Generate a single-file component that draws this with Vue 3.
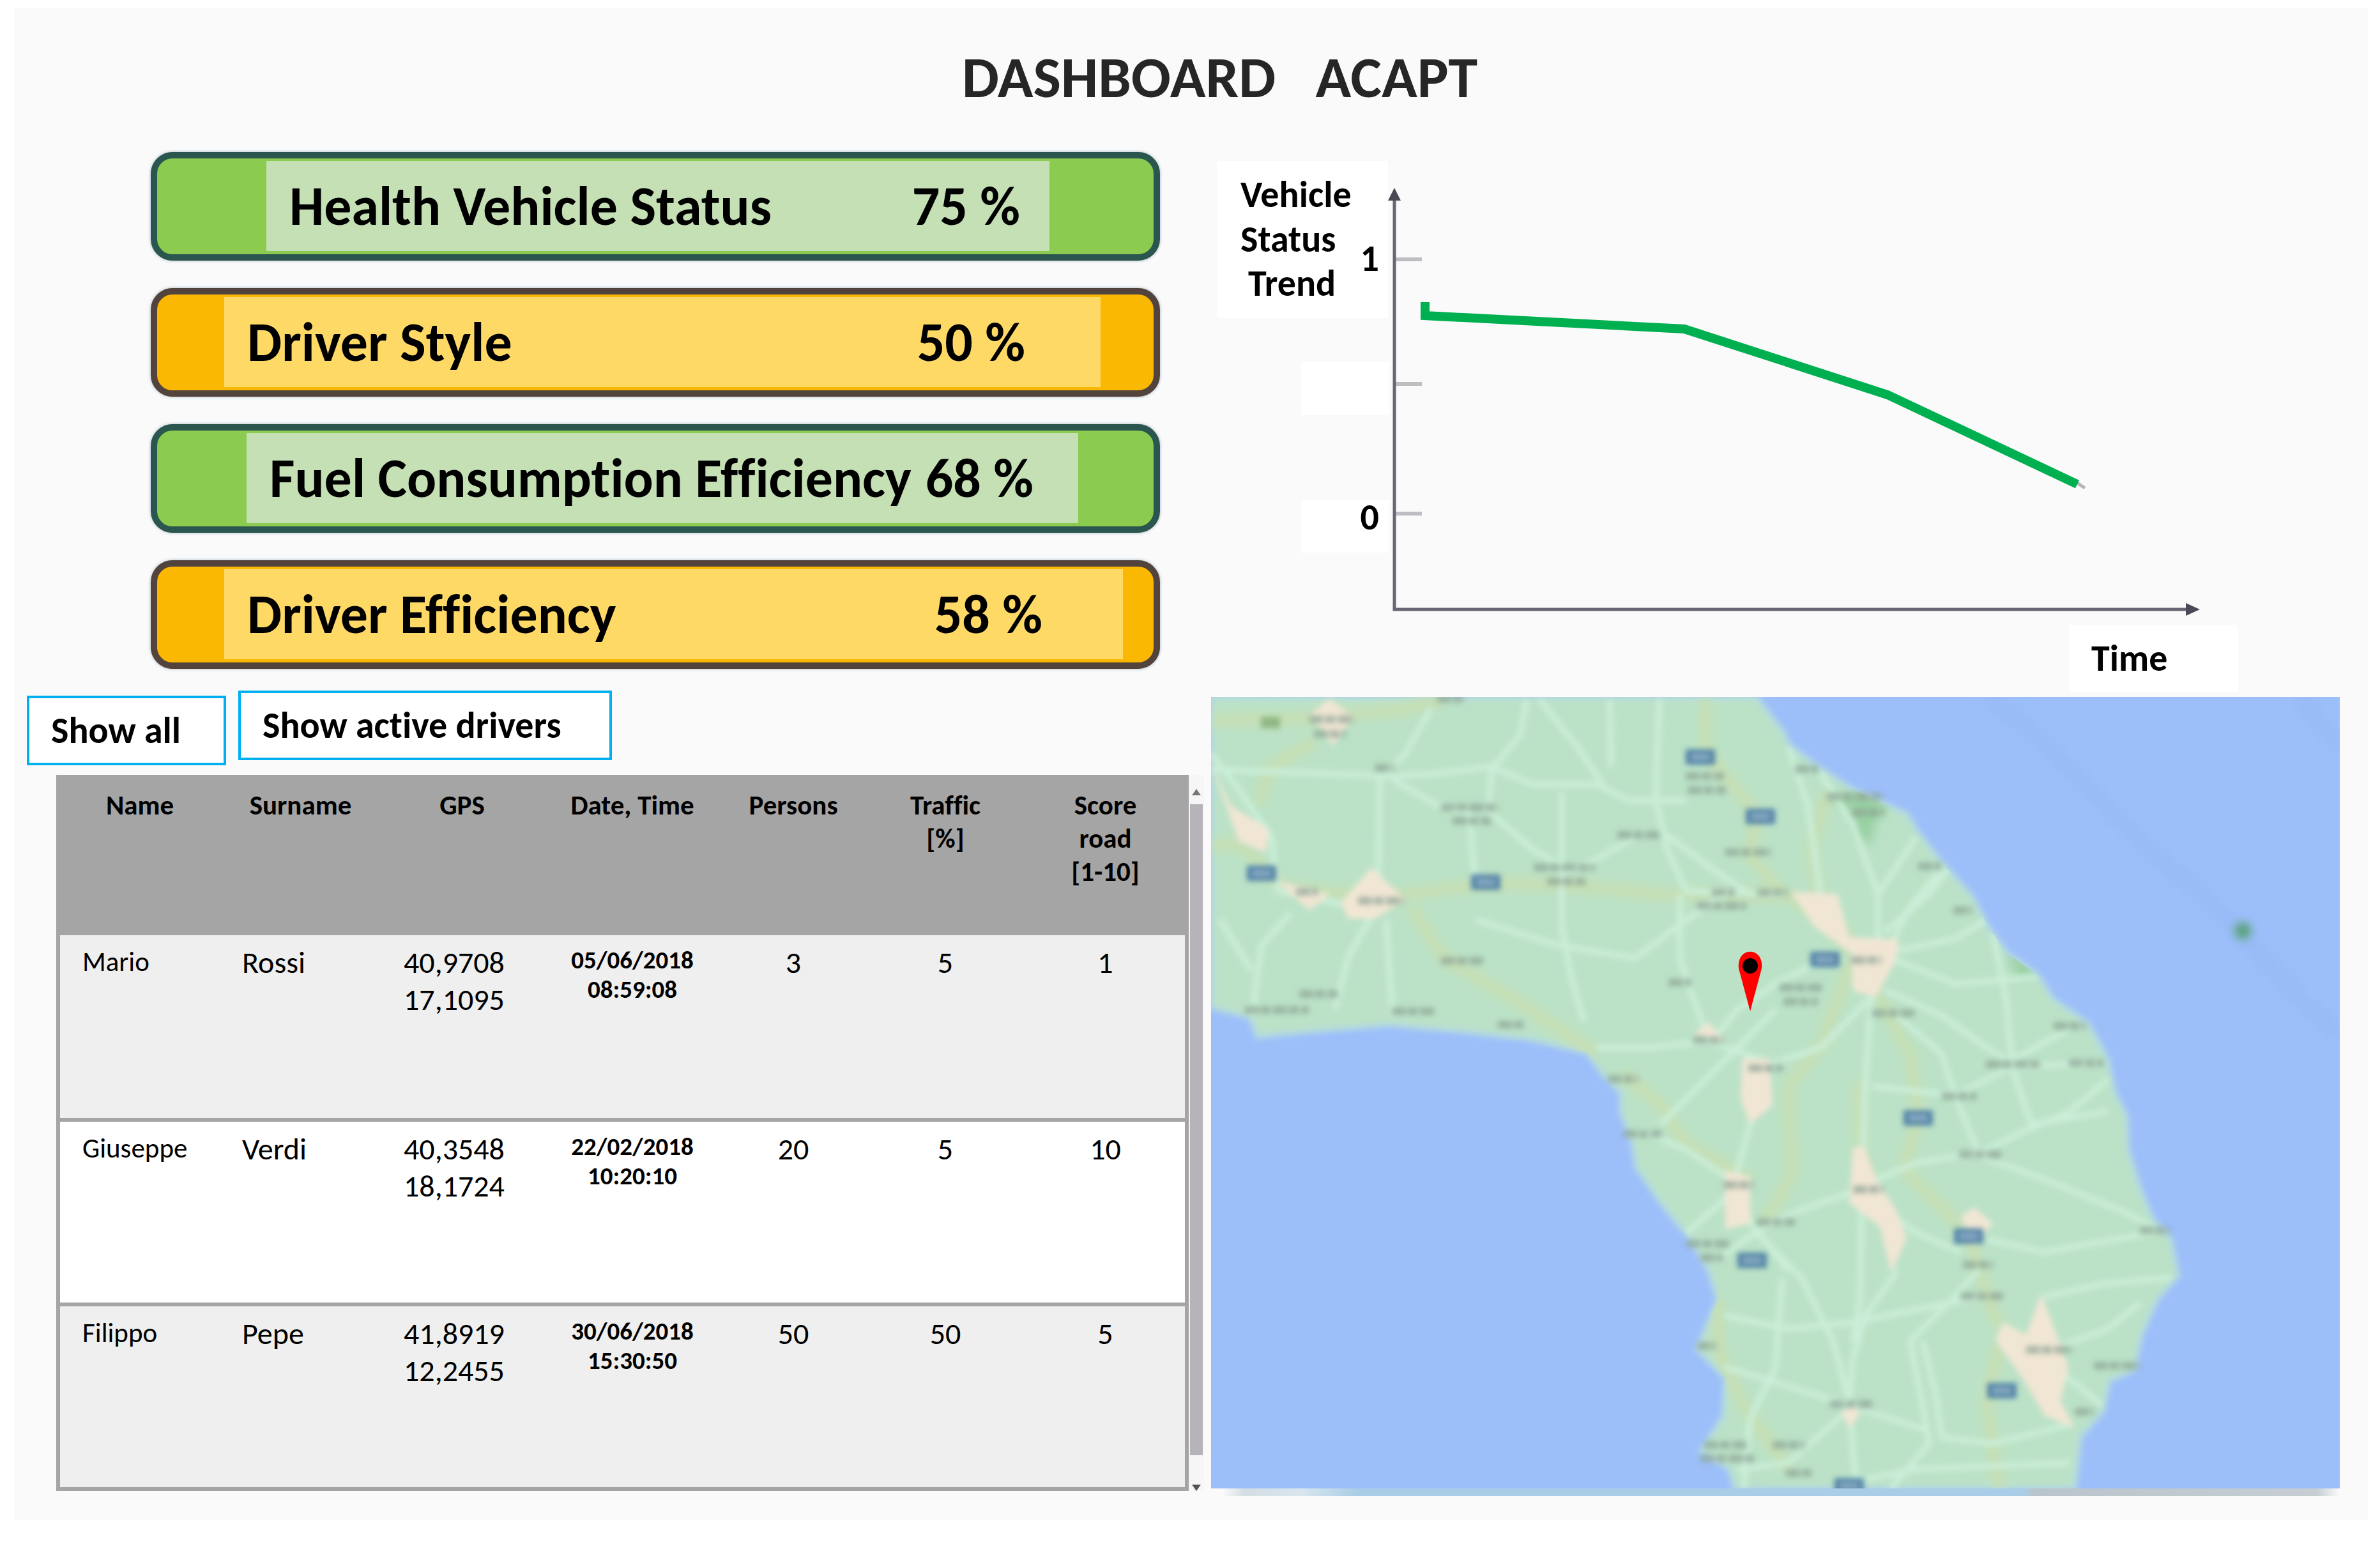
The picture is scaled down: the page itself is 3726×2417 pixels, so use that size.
<script setup>
const metrics = [
  { id: 'health', label: 'Health Vehicle Status', value: '75 %', tone: 'green' },
  { id: 'style', label: 'Driver Style', value: '50 %', tone: 'amber' },
  { id: 'fuel', label: 'Fuel Consumption Efficiency', value: '68 %', tone: 'green' },
  { id: 'driver', label: 'Driver Efficiency', value: '58 %', tone: 'amber' },
]

const columns = [
  ['Name'], ['Surname'], ['GPS'], ['Date, Time'], ['Persons'],
  ['Traffic', '[%]'], ['Score', 'road', '[1-10]'],
]

const drivers = [
  { name: 'Mario', surname: 'Rossi', gps: ['40,9708', '17,1095'], date: '05/06/2018', time: '08:59:08', persons: 3, traffic: 5, score: 1 },
  { name: 'Giuseppe', surname: 'Verdi', gps: ['40,3548', '18,1724'], date: '22/02/2018', time: '10:20:10', persons: 20, traffic: 5, score: 10 },
  { name: 'Filippo', surname: 'Pepe', gps: ['41,8919', '12,2455'], date: '30/06/2018', time: '15:30:50', persons: 50, traffic: 50, score: 5 },
]

const coast =
  'M1896 1091H2749L2793 1147L2800 1165L2840 1196L2901 1236L2985 1274L3003 1303L3039 1349L3088 1404L3112 1450L3142 1492L3190 1526L3214 1564L3269 1602L3299 1657L3311 1711L3329 1746L3332 1801L3350 1860L3371 1910L3398 1938L3410 1997L3377 2034L3353 2089L3341 2144L3302 2162L3293 2208L3257 2249L3248 2330H2716L2707 2299L2663 2272L2698 2217L2701 2157L2657 2112L2689 2034L2675 1988L2645 1938L2600 1883L2562 1828L2556 1791L2538 1741L2538 1711L2509 1682L2485 1648L2396 1627L2295 1615L2176 1604L1999 1619L1969 1623L1957 1593L1896 1577Z'

const minorRoads = [
  'M1896 1180L1935 1230L1990 1310L2000 1395L2100 1415',
  'M1896 1205L2000 1208L2170 1215L2240 1212L2335 1200L2400 1228L2500 1228L2550 1253L2640 1253',
  'M2240 1110L2200 1180L2160 1220L2158 1370L2150 1410',
  'M2390 1095L2380 1150L2335 1205L2330 1270L2400 1330L2450 1360',
  'M2410 1095L2470 1170L2510 1230',
  'M2520 1095L2522 1200M2598 1095L2592 1250L2610 1330L2640 1395L2790 1400',
  'M2155 1420L2110 1500L2090 1580M2170 1440L2180 1590M2020 1430L1975 1480L1960 1590M1910 1440L1960 1520',
  'M2180 1220L2250 1260L2300 1272',
  'M2445 1240L2445 1450L2460 1530L2480 1600M2300 1270L2310 1385',
  'M2310 1440L2440 1480L2560 1500L2640 1440L2700 1400',
  'M2560 1310L2490 1350L2440 1370M2600 1300L2680 1360L2740 1400',
  'M2630 1400L2630 1500L2650 1560L2675 1630L2760 1660',
  'M2500 1640L2580 1640L2680 1630L2720 1580L2780 1540L2860 1500',
  'M2600 1760L2700 1660L2780 1580M2750 1660L2740 1760L2715 1850L2745 1920L2800 1990',
  'M2715 1850L2640 1800L2570 1770M2720 1860L2640 1930',
  'M2760 1670L2850 1640L2930 1560L2940 1480M2930 1560L2920 1700L2915 1860',
  'M2800 1170L2830 1260L2850 1400M2850 1210L2900 1290L2940 1400L2940 1470',
  'M2950 1460L3020 1400L3050 1360M2960 1490L3060 1470L3110 1440M2960 1500L3060 1540L3190 1530',
  'M2950 1550L3040 1590L3110 1640L3160 1670L3270 1665',
  'M3000 1310L2940 1400M3040 1360L2990 1420L2960 1480M3120 1460L3140 1560L3150 1660L3240 1610',
  'M2970 1590L3040 1650L3060 1715L3100 1810L3210 1850L3320 1895L3370 1920',
  'M2930 1700L3060 1715L3150 1670M3300 1690L3240 1740L3170 1770L3100 1805',
  'M2930 1850L3000 1820L3100 1805M2920 1860L2830 1890L2770 1915L2690 1970',
  'M2970 1990L2920 2060L2900 2130L2895 2200L2905 2320M2915 1870L2912 2040L2900 2100',
  'M2750 1930L2820 2000L2870 2100L2895 2195M2700 2060L2800 2080L2900 2070L3000 2050L3100 2030',
  'M3100 1985L3060 2030L2990 2100L3010 2200L3020 2260L2960 2330',
  'M3200 2030L3290 2010L3400 2000M3220 2110L3300 2080L3350 2040M3230 2150L3290 2200',
  'M3010 2100L3030 2180L3040 2250L3120 2260L3240 2230M2900 2320L3000 2300L3240 2290',
  'M2700 2140L2800 2170L2895 2200L3020 2240M2720 2300L2800 2290L2890 2210M2790 2000L2780 2140L2740 2220L2730 2330',
  'M3150 1670L3180 1760L3300 1740M3070 1960L3000 1930L2960 1900M3110 1940L3200 1960L3370 1930',
]

const mainRoads = [
  'M1896 1128L2060 1124L2200 1110L2260 1095',
  'M1896 1325L1940 1320L2010 1390L2160 1405L2330 1383L2450 1385L2600 1400L2800 1402L2900 1470',
  'M2670 1095L2672 1180L2750 1275L2740 1340L2790 1400',
  'M1970 1260L1990 1200L2060 1160',
  'M2860 1240L2835 1330L2850 1420L2900 1490',
  'M2900 1500L2850 1640L2800 1700L2805 1840L2760 1920',
  'M2930 1540L2990 1650L3003 1750L2980 1830L3080 1930L3100 1990L3130 2080',
  'M2910 1690L2912 1800L2930 1860M2540 1680L2600 1730L2640 1790L2740 1850',
  'M2690 2030L2690 2110L2730 2200L2800 2300M3130 2100L3110 2200L3130 2330',
  'M2210 1420L2260 1500L2380 1570L2500 1650',
]

const towns = [
  'M2804 1396L2877 1400L2895 1467L2973 1471L2967 1505L2937 1560L2901 1551L2898 1492L2840 1450Z',
  'M2901 1796H2919L2937 1846L2967 1892L2985 1938L2961 1993L2943 1920L2895 1883Z',
  'M3196 2025L3226 2107L3238 2139L3226 2194L3248 2235L3202 2217L3166 2157L3124 2098L3136 2070L3172 2089Z',
  'M2701 1833L2740 1842V1915L2701 1924Z',
  'M2728 1657L2770 1657L2775 1730L2740 1760L2725 1720Z',
  'M1896 1195L1927 1261L1987 1299L1981 1335L1939 1316Z',
  'M2099 1413L2147 1358L2200 1408L2153 1438L2111 1438Z',
  'M2000 1380L2082 1400L2050 1425Z',
  'M2052 1118L2082 1093L2117 1122L2087 1168Z',
  'M3070 1905L3090 1890L3120 1915L3090 1950Z',
  'M2650 1620L2675 1600L2700 1630Z',
  'M2882 2210L2902 2200L2912 2215L2895 2235Z',
]

const parks = [
  'M2855 1250L2920 1240L2955 1262L2935 1290L2930 1325L2905 1305L2900 1270Z',
  'M3140 1495L3175 1505L3185 1530L3160 1530Z',
]

// Place-name marks: centre x, centre y, width
const places = [
  [2085, 1126, 70], [2082, 1149, 50], [2168, 1202, 30], [2301, 1264, 90], [2304, 1285, 60],
  [2565, 1307, 66], [2669, 1215, 60], [2672, 1237, 60], [2737, 1334, 72], [2449, 1358, 95],
  [2452, 1380, 60], [2046, 1396, 34], [2162, 1410, 72], [2698, 1397, 36], [2695, 1418, 77],
  [2775, 1397, 48], [2289, 1504, 66], [2630, 1538, 36], [2064, 1556, 60], [1999, 1581, 100],
  [2212, 1583, 66], [2366, 1604, 42], [2675, 1628, 48], [2764, 1672, 54], [2541, 1689, 48],
  [2271, 1094, 42], [2828, 1204, 36], [2905, 1247, 90], [2925, 1272, 50], [2819, 1546, 66],
  [2819, 1568, 54], [2922, 1503, 48], [2964, 1586, 66], [3021, 1356, 36], [3073, 1425, 30],
  [3240, 1606, 50], [3151, 1666, 84], [3266, 1664, 54], [3067, 1716, 54], [3100, 1807, 66],
  [2925, 1862, 48], [3374, 1926, 48], [3097, 1980, 48], [3103, 2029, 66], [3208, 2113, 72],
  [3314, 2138, 72], [2898, 2198, 66], [2816, 2306, 40], [3263, 2210, 30], [2571, 1775, 60],
  [2722, 1855, 48], [2780, 1913, 60], [2675, 1947, 70], [2680, 1969, 36], [2672, 2107, 30],
  [2701, 2262, 66], [2704, 2283, 84], [2800, 2262, 50],
]

const shields = [
  [2662, 1185], [2756, 1278], [1975, 1367], [2326, 1381], [2857, 1502],
  [3003, 1750], [3082, 1935], [3134, 2177], [2895, 2326], [2743, 1973],
]
</script>

<template>
  <main class="dashboard">
    <h1 class="title">DASHBOARD&nbsp;&nbsp; ACAPT</h1>

    <div class="columns">
      <section class="left">
        <div class="metrics">
          <div v-for="m in metrics" :key="m.id" class="metric" :class="[`metric-${m.tone}`, `metric-${m.id}`]">
            <div class="metric-fill">
              <span>{{ m.label }}</span>
              <span>{{ m.value }}</span>
            </div>
          </div>
        </div>

        <div class="actions">
          <button type="button" class="action action-all">Show all</button>
          <button type="button" class="action action-active">Show active drivers</button>
        </div>

        <div class="table-area">
          <table class="drivers">
            <colgroup>
              <col class="c-name"><col class="c-surname"><col class="c-gps"><col class="c-date">
              <col class="c-persons"><col class="c-traffic"><col class="c-score">
            </colgroup>
            <thead>
              <tr>
                <th v-for="lines in columns" :key="lines[0]" scope="col">
                  <div v-for="line in lines" :key="line">{{ line }}</div>
                </th>
              </tr>
            </thead>
            <tbody>
              <tr v-for="d in drivers" :key="d.name">
                <td class="name">{{ d.name }}</td>
                <td class="text">{{ d.surname }}</td>
                <td class="text"><div v-for="g in d.gps" :key="g">{{ g }}</div></td>
                <td class="date"><div>{{ d.date }}</div><div>{{ d.time }}</div></td>
                <td class="number">{{ d.persons }}</td>
                <td class="number">{{ d.traffic }}</td>
                <td class="number">{{ d.score }}</td>
              </tr>
            </tbody>
          </table>
          <div class="scrollbar" aria-hidden="true">
            <i class="arrow arrow-up"></i>
            <i class="thumb"></i>
            <i class="arrow arrow-down"></i>
          </div>
        </div>
      </section>

      <section class="right">
        <svg class="chart" viewBox="1896 238 1767 853" role="img" aria-label="Vehicle Status Trend">
          <g fill="#fff">
            <rect x="1906" y="252" width="267" height="246" />
            <rect x="2037" y="567" width="138" height="83" />
            <rect x="2037" y="783" width="138" height="82" />
            <rect x="3239" y="978" width="265" height="105" />
          </g>
          <g fill="none" stroke="#bdbdc2" stroke-width="6">
            <path d="M2184 406H2226M2184 601H2226M2184 804H2226" />
          </g>
          <path d="M2183 305V954H3432" fill="none" stroke="#686575" stroke-width="5" />
          <path d="M2183 294L2193 314H2173ZM3444 954L3422 944V964Z" fill="#4b4858" />
          <path d="M3246 752L3264 764" stroke="#b5b5b5" stroke-width="5" />
          <path d="M2231 473V494L2637 515L2955 618L3252 758" fill="none" stroke="#00b050" stroke-width="14" />
          <g class="chart-text">
            <text x="1942" y="324">Vehicle</text>
            <text x="1942" y="394">Status</text>
            <text x="1954" y="463">Trend</text>
            <text x="2159" y="424" text-anchor="end">1</text>
            <text x="2159" y="829" text-anchor="end">0</text>
            <text x="3274" y="1050">Time</text>
          </g>
        </svg>

        <svg class="map" viewBox="1896 1091 1767 1239" role="img" aria-label="Driver position map">
          <defs>
            <filter id="soft" x="-5%" y="-5%" width="110%" height="110%"><feGaussianBlur stdDeviation="4" /></filter>
            <filter id="haze" x="-5%" y="-5%" width="110%" height="110%"><feGaussianBlur stdDeviation="8" /></filter>
            <clipPath id="land"><path :d="coast" /></clipPath>
          </defs>
          <rect x="1896" y="1091" width="1767" height="1239" fill="#9cbffa" />
          <path d="M3110 1091C3240 1180 3290 1270 3400 1360S3560 1530 3663 1620M3600 1091L3663 1170" fill="none" stroke="#99bbf6" stroke-width="30" filter="url(#haze)" />
          <g filter="url(#soft)">
            <path :d="coast" fill="#bbe2c7" stroke="#b4d9e0" stroke-width="8" />
          </g>
          <g clip-path="url(#land)">
            <g filter="url(#haze)">
              <path v-for="p in parks" :key="p" :d="p" fill="#98d0a2" />
              <path v-for="r in mainRoads" :key="r" :d="r" fill="none" stroke="#c8dfb2" stroke-width="18" />
            </g>
            <g filter="url(#soft)">
              <path v-for="r in minorRoads" :key="r" :d="r" fill="none" stroke="#cbeed8" stroke-width="9" />
              <path v-for="t in towns" :key="t" :d="t" fill="#f1e6d4" />
            </g>
          </g>
          <g filter="url(#soft)">
            <path v-for="p in places" :key="p.join()" :d="`M${p[0] - p[2] / 2} ${p[1]}h${p[2]}`" fill="none" stroke="#8ba294" stroke-width="12" stroke-dasharray="22 3 15 4" opacity=".7" />
            <rect v-for="s in shields" :key="s.join()" :x="s[0] - 23" :y="s[1] - 12" width="46" height="24" fill="#5384a8" />
            <path v-for="s in shields" :key="`t${s.join()}`" :d="`M${s[0] - 13} ${s[1]}h26`" stroke="#a5c3d6" stroke-width="7" stroke-dasharray="7 3" />
            <rect x="1974" y="1122" width="30" height="18" fill="#8fb783" />
            <circle cx="3511" cy="1457" r="20" fill="#8ab8d8" />
            <circle cx="3511" cy="1457" r="12" fill="#63a68c" />
          </g>
          <path d="M2740 1583L2722 1516C2718 1481 2762 1481 2758 1516Z" fill="#f00" />
          <circle cx="2740" cy="1512" r="12" fill="#000" />
        </svg>
        <div class="map-edge"></div>
      </section>
    </div>
  </main>
</template>

<style>
body {
  background: #fff;
}
</style>

<style scoped>
.dashboard {
  margin: 12px 19px 36px 22px;
  padding-bottom: 38px;
  background: #fafafa;
  font-family: Carlito, Lato, sans-serif;
  font-variant-ligatures: none;
  color: #000;
}

.title {
  margin: 0;
  height: 226px;
  padding: 61px 0 0 90px;
  box-sizing: border-box;
  font-size: 92px;
  line-height: 96px;
  font-weight: 700;
  text-align: center;
  color: #262626;
}

.columns {
  display: grid;
  grid-template-columns: 1874fr 1767fr;
  padding-right: 44px;
}

.left,
.right {
  display: flex;
  flex-direction: column;
  min-width: 0;
}

.metrics {
  display: flex;
  flex-direction: column;
  gap: 43px;
  margin: 0 80px 0 214px;
}

.metric {
  height: 170px;
  box-sizing: border-box;
  padding-top: 4px;
  border: 10px solid;
  border-radius: 34px;
  box-shadow: 0 0 5px #a9b5c4;
}

.metric-green {
  background: #8bcb50;
  border-color: #2b5650;
}

.metric-amber {
  background: #fbb803;
  border-color: #52443c;
}

.metric-fill {
  display: flex;
  align-items: center;
  justify-content: space-between;
  height: 141px;
  box-sizing: border-box;
  padding-left: 36px;
  font-size: 86px;
  font-weight: 700;
  line-height: 96px;
  white-space: nowrap;
}

.metric-green .metric-fill {
  background: #c5e0b4;
}

.metric-amber .metric-fill {
  background: #ffd966;
}

.metric-health .metric-fill {
  margin: 0 163px 0 171px;
  padding-right: 46px;
}

.metric-style .metric-fill {
  margin: 0 83px 0 105px;
  padding-right: 118px;
}

.metric-fuel .metric-fill {
  margin: 0 118px 0 140px;
  padding-right: 70px;
}

.metric-driver .metric-fill {
  margin: 0 48px 0 105px;
  padding-right: 126px;
}

.actions {
  display: flex;
  align-items: flex-start;
  gap: 19px;
  margin: 34px 0 0 20px;
  height: 132px;
}

.action {
  height: 109px;
  padding: 0 0 0 34px;
  background: #fff;
  border: 4px solid #00b0f0;
  font-family: inherit;
  font-variant-ligatures: inherit;
  font-size: 58px;
  font-weight: 700;
  color: #000;
  text-align: left;
  white-space: nowrap;
}

.action-all {
  width: 312px;
  margin-top: 8px;
}

.action-active {
  width: 585px;
}

.table-area {
  display: flex;
  margin: 0 11px 0 66px;
}

.drivers {
  flex: 1;
  table-layout: fixed;
  border-collapse: collapse;
  border: 6px solid #a5a5a5;
}

.c-name { width: 253px; }
.c-surname { width: 253px; }
.c-gps { width: 253px; }
.c-date { width: 280px; }
.c-persons { width: 224px; }
.c-traffic { width: 252px; }

.drivers th {
  height: 248px;
  box-sizing: border-box;
  padding: 16px 0 0;
  vertical-align: top;
  background: #a5a5a5;
  font-size: 43px;
  line-height: 52px;
  font-weight: 700;
}

.drivers td {
  height: 289px;
  box-sizing: border-box;
  padding: 14px 0 0 35px;
  vertical-align: top;
  text-align: left;
  background: #efefef;
  border-bottom: 6px solid #a5a5a5;
}

.drivers tr:nth-child(even) td {
  background: #fff;
}

.drivers .name {
  padding-top: 16px;
  font-size: 43px;
  line-height: 52px;
}

.drivers .text,
.drivers .number {
  font-size: 48px;
  line-height: 58px;
}

.drivers .date {
  padding: 16px 0 0;
  text-align: center;
  font-size: 39px;
  line-height: 46px;
  font-weight: 700;
}

.drivers .number {
  padding-left: 0;
  text-align: center;
}

.scrollbar {
  display: flex;
  flex-direction: column;
  align-items: center;
  width: 24px;
  padding: 22px 0 0;
  box-sizing: border-box;
  background: #f6f6f7;
}

.thumb {
  flex: 1;
  width: 20px;
  margin: 14px 0 46px;
  background: #b7b4b9;
}

.arrow {
  border: 7px solid transparent;
}

.arrow-up {
  border-top: 0;
  border-bottom: 10px solid #77757c;
}

.arrow-down {
  border-bottom: 0;
  border-top: 10px solid #55535a;
}

.chart,
.map {
  display: block;
  width: 100%;
}

.chart-text {
  font-size: 58px;
  font-weight: 700;
}

.map-edge {
  height: 12px;
  background: linear-gradient(90deg, #fafafa 1%, #d3dde4 3%, #d9e6ee 8%, #a9cde6 13%, #a9cde6 72%, #b9c4cc 73%, #c6ced4 98%, #fafafa);
}
</style>
